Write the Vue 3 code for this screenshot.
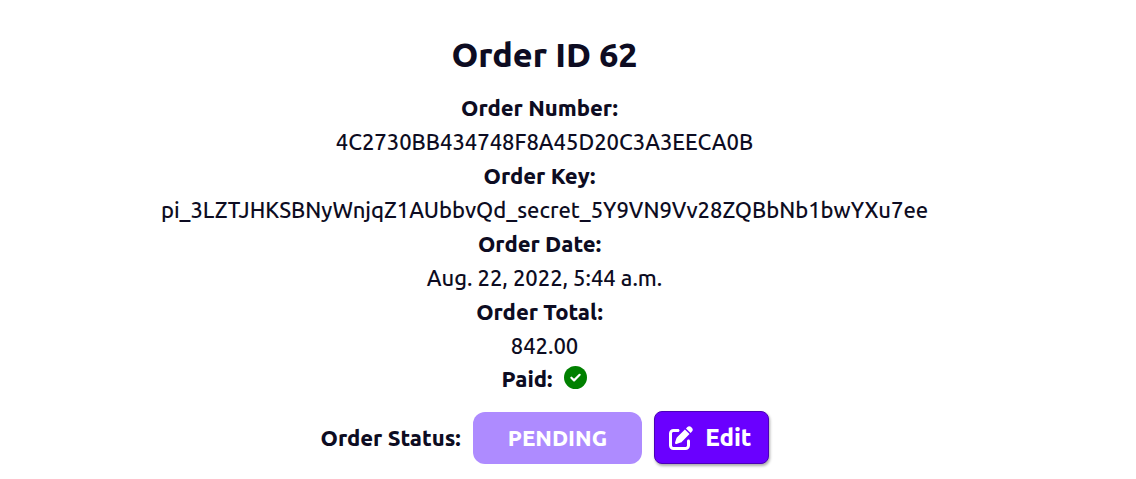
<script setup>
const details = [
  { label: 'Order Number:', value: '4C2730BB434748F8A45D20C3A3EECA0B' },
  { label: 'Order Key:', value: 'pi_3LZTJHKSBNyWnjqZ1AUbbvQd_secret_5Y9VN9Vv28ZQBbNb1bwYXu7ee' },
  { label: 'Order Date:', value: 'Aug. 22, 2022, 5:44 a.m.' },
  { label: 'Order Total:', value: '842.00' },
]
</script>

<template>
  <main class="order">
    <h1>Order ID 62</h1>
    <dl class="details">
      <template v-for="item in details" :key="item.label">
        <dt>{{ item.label }}</dt>
        <dd>{{ item.value }}</dd>
      </template>
    </dl>
    <div class="paid">
      <strong>Paid:</strong>
      <svg viewBox="0 0 512 512" width="23" height="23" role="img" aria-label="Yes">
        <circle cx="256" cy="256" r="256" fill="#008000" />
        <path d="M164 260l60 60 124-124" fill="none" stroke="#fff" stroke-width="48" stroke-linecap="round" stroke-linejoin="round" />
      </svg>
    </div>
    <div class="status">
      <strong>Order Status:</strong>
      <span class="badge">PENDING</span>
      <button type="button" class="edit">
        <svg viewBox="0 0 512 512" width="24" height="24" fill="currentColor" aria-hidden="true">
          <path d="M471.6 21.7c-21.9-21.9-57.3-21.9-79.2 0L362.3 51.7l97.9 97.9 30.1-30.1c21.9-21.9 21.9-57.3 0-79.2L471.6 21.7zm-299.2 220c-6.1 6.1-10.8 13.6-13.5 21.9l-29.6 88.8c-2.9 8.6-.6 18.1 5.8 24.6s15.9 8.7 24.6 5.8l88.8-29.6c8.2-2.7 15.7-7.4 21.9-13.5L437.7 172.3 339.7 74.3 172.4 241.7zM96 64C43 64 0 107 0 160V416c0 53 43 96 96 96H352c53 0 96-43 96-96V320c0-17.7-14.3-32-32-32s-32 14.3-32 32v96c0 17.7-14.3 32-32 32H96c-17.7 0-32-14.3-32-32V160c0-17.7 14.3-32 32-32h96c17.7 0 32-14.3 32-32s-14.3-32-32-32H96z" />
        </svg>
        Edit
      </button>
    </div>
  </main>
</template>

<style>
body {
  background: #fff;
}
</style>

<style scoped>
.order {
  display: flex;
  flex-direction: column;
  align-items: center;
  padding: 29px 47px 15px 0;
  color: #0d0c22;
  font: 500 22px/34px Ubuntu, "Noto Sans", "Open Sans", sans-serif;
}
h1 {
  margin: 0 0 12px;
  font-size: 34px;
  line-height: 50px;
  font-weight: 800;
}
.details {
  margin: 0;
  text-align: center;
}
dt,
strong,
.badge {
  font-weight: 800;
}
dt {
  padding-right: 10px;
}
dd {
  margin: 0;
}
.paid,
.status {
  display: flex;
  align-items: center;
  gap: 12px;
}
.paid {
  line-height: 32px;
}
.paid svg {
  margin-bottom: 3px;
}
.status {
  margin-top: 16px;
}
.badge {
  padding: 9px 35px;
  border-radius: 12px;
  background: #ae8bff;
  color: #fff;
}
.edit {
  display: flex;
  align-items: center;
  gap: 12px;
  padding: 9px 16px 8px 14px;
  border: 1px solid #4b00b8;
  border-radius: 8px;
  background: #6a00ff;
  box-shadow: 1px 2px 3px #0005;
  color: #fff;
  font: inherit;
  font-size: 24px;
  font-weight: 800;
}
</style>
